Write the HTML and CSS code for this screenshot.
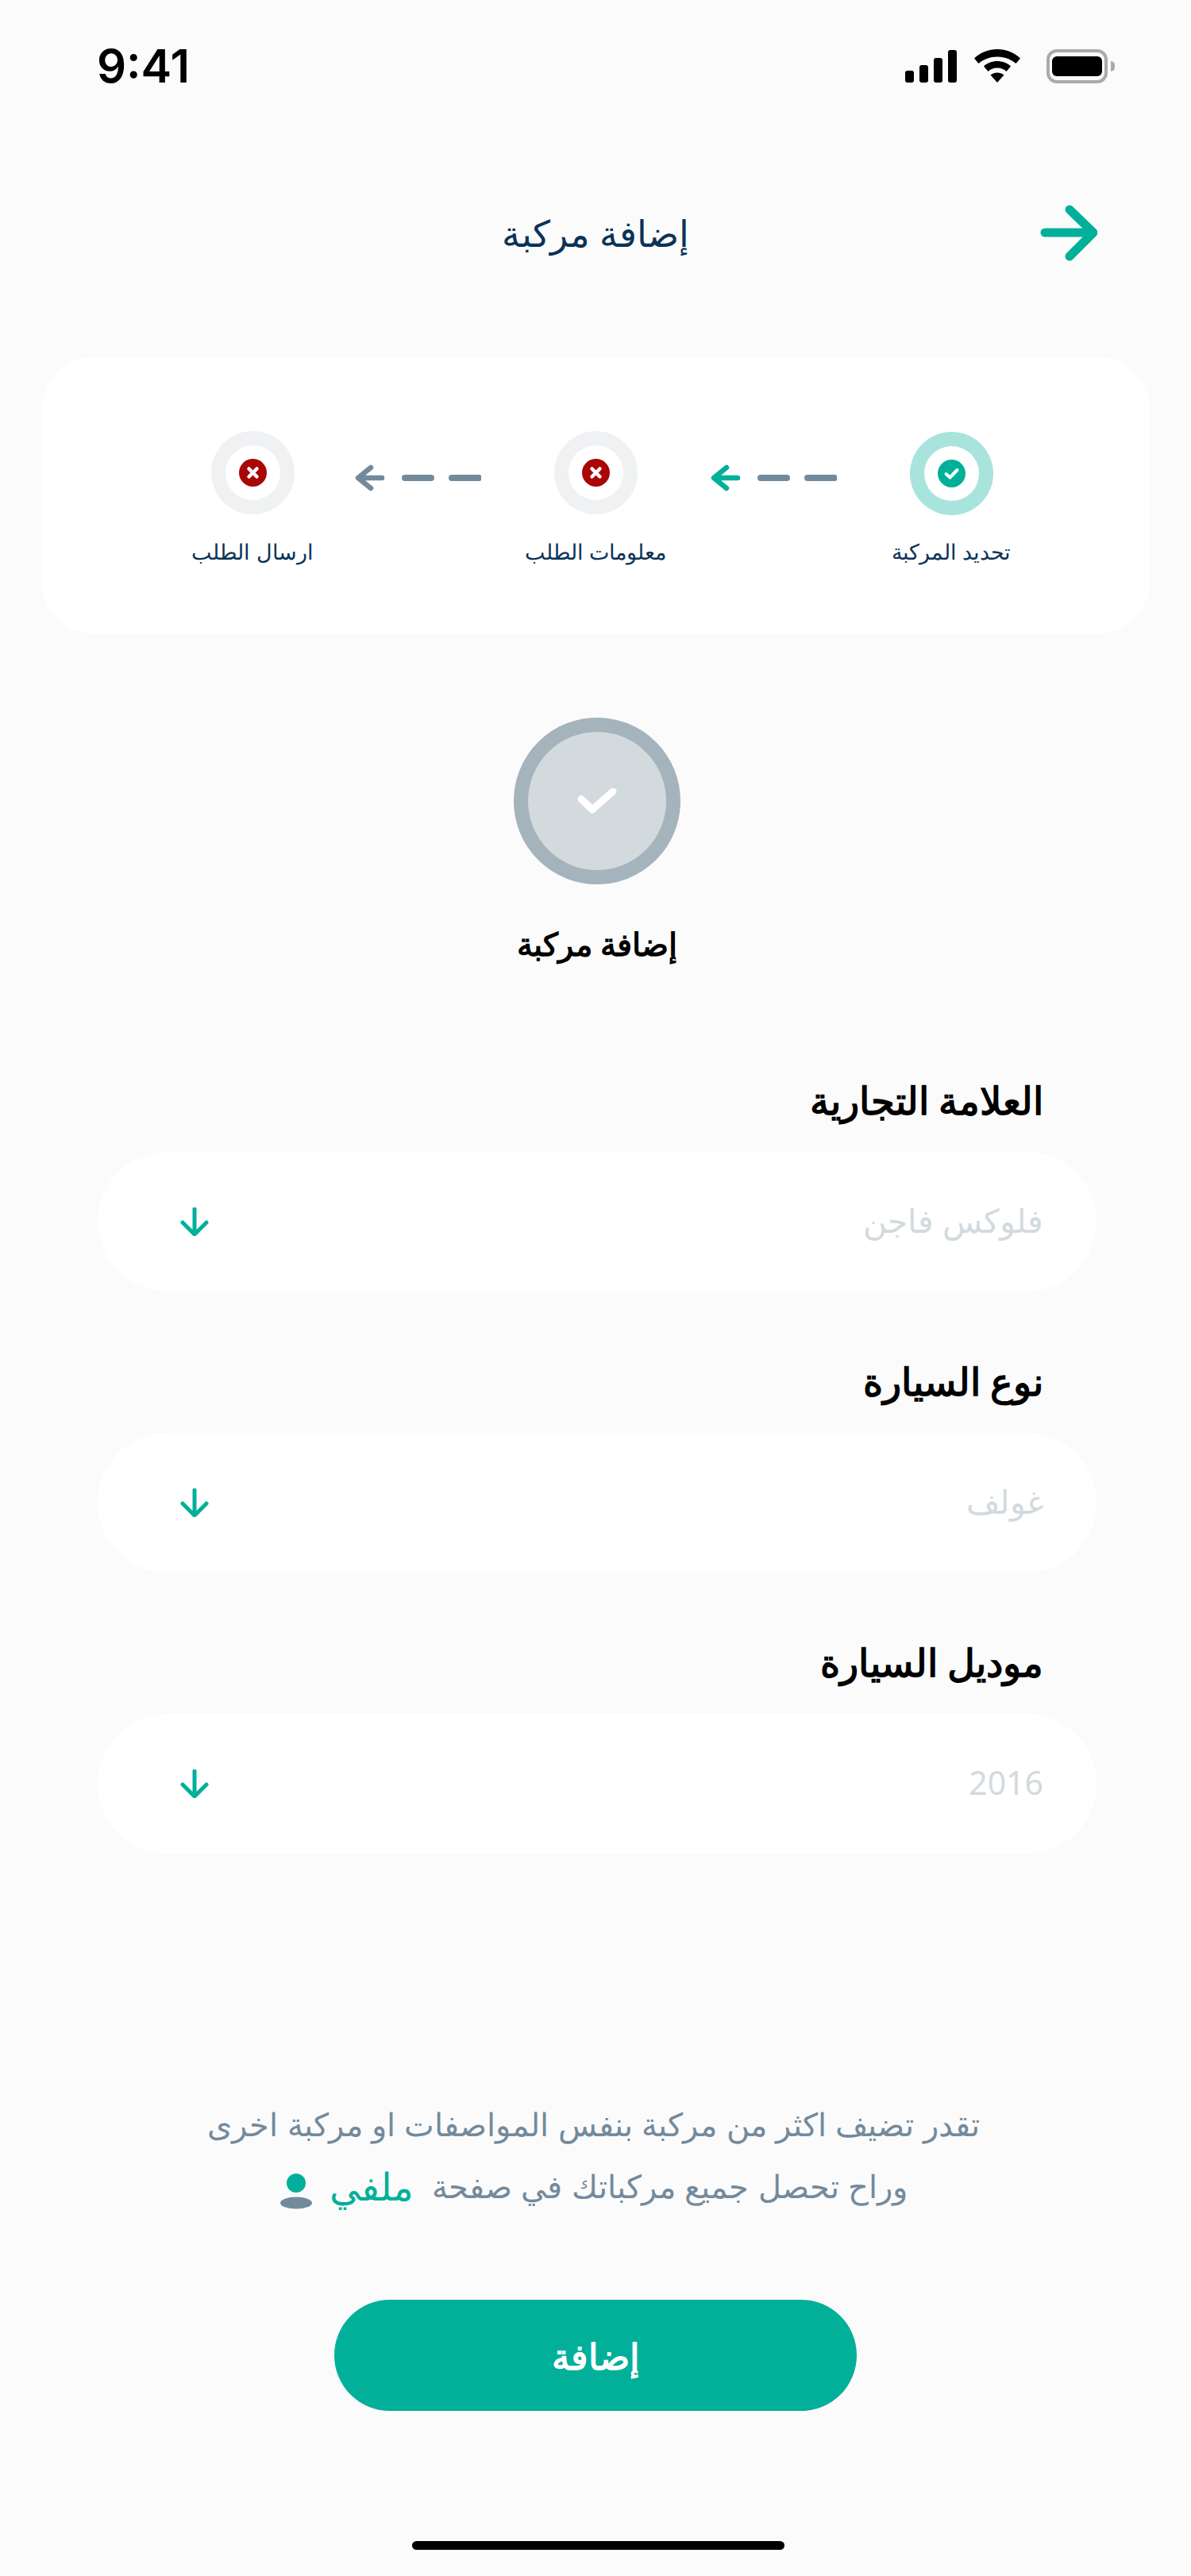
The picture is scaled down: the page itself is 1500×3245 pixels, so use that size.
FILE: index.html
```html
<!DOCTYPE html>
<html lang="ar">
<head>
<meta charset="utf-8">
<title>إضافة مركبة</title>
<link rel="stylesheet" href="styles.css">
</head>
<body>
<main class="screen">
  <div class="status" dir="ltr">
    <span class="time">9:41</span>
    <div class="status-icons">
      <div class="signal"><i class="b1"></i><i class="b2"></i><i class="b3"></i><i class="b4"></i></div>
      <svg class="wifi" width="58" height="42" viewBox="0 0 58 42"><path d="M29 0C18 0 8 4 0 11.500L5.500 18C12 12.500 20 9.500 29 9.500S46 12.500 52.500 18L58 11.500C50 4 40 0 29 0Z"/><path d="M29 15C22.500 15 16 17.500 12 21.500L17.500 28C20.500 25 24.500 23.500 29 23.500S37.500 25 40.500 28L46 21.500C42 17.500 35.500 15 29 15Z"/><path d="M29 29.500C26 29.500 23 30.500 20.500 32.500L29 42L37.500 32.500C35 30.500 32 29.500 29 29.500Z"/></svg>
      <div class="battery"><div class="battery-body"><div class="battery-fill"></div></div><div class="battery-cap"></div></div>
    </div>
  </div>

  <header class="topbar">
    <h1 class="title">إضافة مركبة</h1>
    <svg class="back" width="72" height="72" viewBox="0 0 72 72"><path d="M6 36H66M37 7L67 36L37 66" fill="none" stroke="#02b09a" stroke-width="11" stroke-linecap="round" stroke-linejoin="round"/></svg>
  </header>

  <section class="steps">
    <div class="step">
      <div class="ring ring-done"><div class="ring-inner"><svg width="35" height="35" viewBox="0 0 35 35"><circle cx="17.500" cy="17.500" r="17.500" fill="#02b09a"/><path d="M10.500 18L15.500 22.500L24.500 13" fill="none" stroke="#fff" stroke-width="4" stroke-linecap="round" stroke-linejoin="round"/></svg></div></div>
      <span class="step-label">تحديد المركبة</span>
    </div>
    <svg class="link link-a" width="160" height="36" viewBox="0 0 160 36"><path d="M64 18H97M123 18H157" fill="none" stroke="#738a9c" stroke-width="8" stroke-linecap="round"/><path d="M35 18H6M21 5L5 18L21 31" fill="none" stroke="#02b09a" stroke-width="6.500" stroke-linecap="round" stroke-linejoin="round"/></svg>
    <div class="step">
      <div class="ring"><div class="ring-inner"><svg width="35" height="35" viewBox="0 0 35 35"><circle cx="17.500" cy="17.500" r="17.500" fill="#a90606"/><path d="M12.500 12.500L22.500 22.500M22.500 12.500L12.500 22.500" fill="none" stroke="#fff" stroke-width="4.500" stroke-linecap="round"/></svg></div></div>
      <span class="step-label">معلومات الطلب</span>
    </div>
    <svg class="link link-b" width="160" height="36" viewBox="0 0 160 36"><path d="M64 18H97M123 18H157" fill="none" stroke="#738a9c" stroke-width="8" stroke-linecap="round"/><path d="M35 18H6M21 5L5 18L21 31" fill="none" stroke="#738a9c" stroke-width="6.500" stroke-linecap="round" stroke-linejoin="round"/></svg>
    <div class="step">
      <div class="ring"><div class="ring-inner"><svg width="35" height="35" viewBox="0 0 35 35"><circle cx="17.500" cy="17.500" r="17.500" fill="#a90606"/><path d="M12.500 12.500L22.500 22.500M22.500 12.500L12.500 22.500" fill="none" stroke="#fff" stroke-width="4.500" stroke-linecap="round"/></svg></div></div>
      <span class="step-label">ارسال الطلب</span>
    </div>
  </section>

  <section class="current">
    <div class="big-ring"><svg width="50" height="32" viewBox="0 0 50 32"><path d="M5 13.500L19 27L45 4" fill="none" stroke="#fff" stroke-width="9" stroke-linecap="round" stroke-linejoin="round"/></svg></div>
    <h2 class="current-title">إضافة مركبة</h2>
  </section>

  <form class="fields">
    <div class="field">
      <label class="field-label">العلامة التجارية</label>
      <div class="select"><span class="select-value">فلوكس فاجن</span><svg width="36" height="36" viewBox="0 0 36 36"><path d="M18 2V33M3 19L18 34L33 19" fill="none" stroke="#02b09a" stroke-width="5" stroke-linecap="round" stroke-linejoin="round"/></svg></div>
    </div>
    <div class="field">
      <label class="field-label">نوع السيارة</label>
      <div class="select"><span class="select-value">غولف</span><svg width="36" height="36" viewBox="0 0 36 36"><path d="M18 2V33M3 19L18 34L33 19" fill="none" stroke="#02b09a" stroke-width="5" stroke-linecap="round" stroke-linejoin="round"/></svg></div>
    </div>
    <div class="field">
      <label class="field-label">موديل السيارة</label>
      <div class="select"><span class="select-value">2016</span><svg width="36" height="36" viewBox="0 0 36 36"><path d="M18 2V33M3 19L18 34L33 19" fill="none" stroke="#02b09a" stroke-width="5" stroke-linecap="round" stroke-linejoin="round"/></svg></div>
    </div>
  </form>

  <section class="note">
    <p class="note-line">تقدر تضيف اكثر من مركبة بنفس المواصفات او مركبة اخرى</p>
    <p class="note-line"><span>وراح تحصل جميع مركباتك في صفحة</span><span class="accent">ملفي</span><svg class="person" width="42" height="46" viewBox="0 0 42 46"><circle cx="21" cy="12" r="12" fill="#02b09a"/><ellipse cx="21" cy="37" rx="20" ry="7.500" fill="#738a9c"/></svg></p>
  </section>

  <button class="submit" type="button">إضافة</button>
  <div class="home-bar"></div>
</main>
</body>
</html>
```
FILE: styles.css
```css
* { box-sizing: border-box; }
html, body { margin: 0; padding: 0; }
body { background: #fbfbfb; font-family: "Noto Sans", sans-serif; }
.screen { width: 1500px; height: 3245px; display: flex; flex-direction: column; overflow: hidden; direction: rtl; }

.status { height: 62px; margin-top: 62px; padding: 0 96px 0 122px; display: flex; justify-content: space-between; align-items: flex-start; direction: ltr; }
.time { font: 600 58px/42px Inter, sans-serif; color: #000; }
.status-icons { display: flex; align-items: flex-start; gap: 22px; }
.signal { display: flex; align-items: flex-end; gap: 7px; height: 42px; }
.signal i { display: block; width: 11px; background: #000; border-radius: 3px; }
.b1 { height: 15px; } .b2 { height: 22px; } .b3 { height: 31px; } .b4 { height: 41px; }
.wifi { fill: #000; }
.battery { display: flex; align-items: center; gap: 4px; margin-left: 11px; }
.battery-body { width: 77px; height: 43px; border: 4px solid #aaa; border-radius: 13px; padding: 5px 3px; }
.battery-fill { height: 100%; background: #000; border-radius: 6px; }
.battery-cap { width: 5px; height: 13px; background: #aaa; border-radius: 0 6px 6px 0; }

.topbar { height: 72px; margin-top: 133px; position: relative; display: flex; justify-content: center; align-items: center; }
.title { margin: 0; font-size: 46px; font-weight: 400; color: #0b3358; }
.back { position: absolute; left: 1310px; top: 0; }

.steps { width: 1396px; height: 348px; margin: 121px 52px 0; padding: 93px 150px 0 0; background: #fff; border-radius: 66px; display: flex; align-items: flex-start; }
.step { width: 200px; flex: none; display: flex; flex-direction: column; align-items: center; }
.ring { width: 105px; height: 105px; border-radius: 50%; background: #f0f1f3; padding: 18px; }
.ring-done { background: #a8e4dc; margin: 1px 0 -1px; }
.ring-inner { width: 100%; height: 100%; border-radius: 50%; background: #fff; display: flex; align-items: center; justify-content: center; }
.step-label { margin-top: 19px; font-size: 27px; line-height: 56px; color: #0b3358; white-space: nowrap; }
.link { flex: none; margin-top: 41px; }
.link-a { margin-right: 44px; margin-left: 44px; }
.link-b { margin-right: 44px; margin-left: 28px; }

.current { margin-top: 106px; padding-left: 4px; display: flex; flex-direction: column; align-items: center; }
.big-ring { width: 210px; height: 210px; border-radius: 50%; background: #d3dade; border: 18px solid #a5b3bc; display: flex; align-items: center; justify-content: center; }
.current-title { margin: 40px 0 0; font-size: 40px; line-height: 70px; font-weight: 700; color: #000; }

.fields { margin-top: 93px; padding: 0 119px 0 123px; display: flex; flex-direction: column; gap: 44px; }
.field { display: flex; flex-direction: column; }
.field-label { font-size: 48px; font-weight: 700; line-height: 138px; height: 134px; padding-right: 67px; color: #000; }
.select { height: 176px; background: #fff; border-radius: 88px; padding: 0 67px 0 104px; display: flex; align-items: center; justify-content: space-between; }
.select-value { font-size: 41px; line-height: 56px; margin-top: -4px; color: #d3dade; }

.note { margin-top: 302px; padding-right: 5px; display: flex; flex-direction: column; align-items: center; }
.note-line { margin: 0; font-size: 40px; word-spacing: 1px; line-height: 78px; color: #738a9c; white-space: nowrap; display: flex; align-items: center; }
.accent { color: #02b09a; font-size: 48px; margin-right: 23px; }
.person { margin: 14px 21px 0 0; }
.submit { display: block; width: 658px; height: 140px; margin: 104px auto 0; border: 0; border-radius: 70px; background: #02b09a; color: #fff; font: 700 45px "Noto Sans", sans-serif; }
.home-bar { width: 469px; height: 11px; margin: 164px 512px 0 0; background: #000; border-radius: 6px; }
```
